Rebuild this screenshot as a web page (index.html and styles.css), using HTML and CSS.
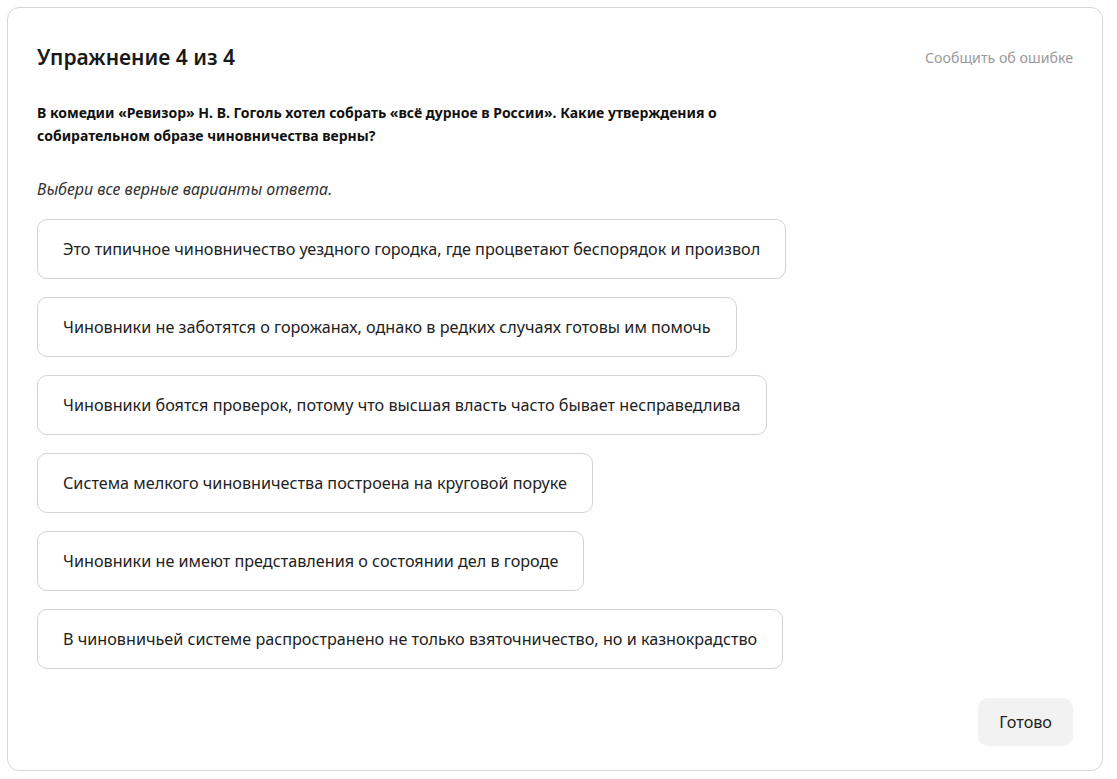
FILE: index.html
```html
<!DOCTYPE html>
<html lang="ru">
<head>
    <meta charset="UTF-8">
    <meta name="viewport" content="width=device-width, initial-scale=1.0">
    <title>Упражнение 4 из 4</title>
    <link rel="stylesheet" href="styles.css">
</head>
<body>
<div class="card">
    <div class="card-head">
        <h1>Упражнение 4 из 4</h1>
        <a class="report" href="#">Сообщить об ошибке</a>
    </div>
    <p class="question">В комедии «Ревизор» Н. В. Гоголь хотел собрать «всё дурное в России». Какие утверждения о собирательном образе чиновничества верны?</p>
    <p class="hint">Выбери все верные варианты ответа.</p>
    <div class="options">
        <button class="option">Это типичное чиновничество уездного городка, где процветают беспорядок и произвол</button>
        <button class="option">Чиновники не заботятся о горожанах, однако в редких случаях готовы им помочь</button>
        <button class="option">Чиновники боятся проверок, потому что высшая власть часто бывает несправедлива</button>
        <button class="option">Система мелкого чиновничества построена на круговой поруке</button>
        <button class="option">Чиновники не имеют представления о состоянии дел в городе</button>
        <button class="option">В чиновничьей системе распространено не только взяточничество, но и казнокрадство</button>
    </div>
    <div class="card-foot">
        <button class="done">Готово</button>
    </div>
</div>
</body>
</html>
```

FILE: styles.css
```css
body {
    font-family: "Source Sans Pro", "Noto Sans", Arial, sans-serif;
    background: #fff;
    color: #222;
    margin: 0;
    padding: 7px 14px 7px 7px;
}
.card {
    border: 1px solid #d6d6d6;
    border-radius: 12px;
    padding: 29px 29px 24px 29px;
}
.card-head {
    display: flex;
    justify-content: space-between;
    align-items: center;
    height: 40px;
}
h1 {
    margin: 0;
    font-size: 21px;
    font-weight: 600;
    color: #1a1a1a;
}
.report {
    color: #9a9a9a;
    text-decoration: none;
    font-size: 14.2px;
}
.question {
    margin: 24px 0 0;
    max-width: 700px;
    font-size: 14px;
    font-weight: 700;
    line-height: 23px;
    color: #111;
}
.hint {
    margin: 31px 0 0;
    font-size: 16px;
    font-style: italic;
    color: #333;
}
.options {
    display: flex;
    flex-direction: column;
    align-items: flex-start;
    gap: 18px;
    margin-top: 19px;
}
.option {
    font: inherit;
    font-size: 16.2px;
    color: #222;
    background: #fff;
    border: 1px solid #d3d3d3;
    border-radius: 10px;
    height: 60px;
    padding: 0 25px;
    text-align: left;
}
.card-foot {
    display: flex;
    justify-content: flex-end;
    margin-top: 29px;
}
.done {
    font: inherit;
    font-size: 16.2px;
    color: #222;
    background: #f2f2f2;
    border: none;
    border-radius: 10px;
    height: 48px;
    padding: 0 21px;
}
```
